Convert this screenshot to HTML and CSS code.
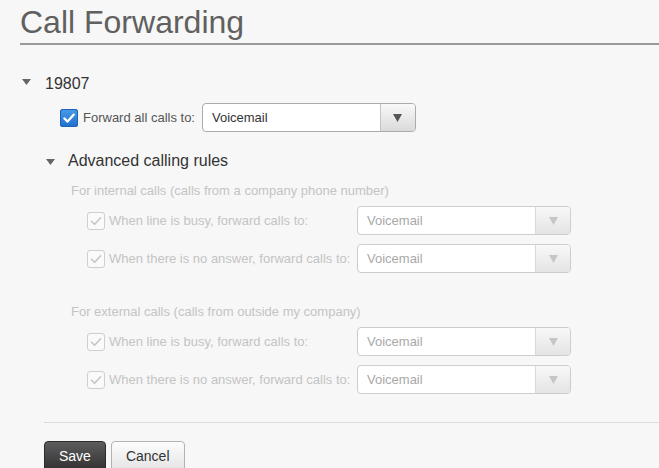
FILE: index.html
```html
<!DOCTYPE html>
<html lang="en">
<head>
<meta charset="utf-8">
<title>Call Forwarding</title>
<link rel="stylesheet" href="styles.css">
</head>
<body>
<div class="page">
  <h1 class="title">Call Forwarding</h1>

  <div class="line-head">
    <svg class="caret" width="9" height="6" viewBox="0 0 9 6"><polygon points="0,0 9,0 4.5,6"/></svg>
    <span class="line-num">19807</span>
  </div>

  <div class="fwd-row">
    <span class="cb cb-on"><svg width="18" height="18" viewBox="0 0 18 18"><path d="M4.3 9.4 L7.6 12.6 L13.8 5.6"/></svg></span>
    <span class="fwd-label">Forward all calls to:</span>
    <div class="select">
      <span class="select-value">Voicemail</span>
      <span class="select-btn"><svg width="9" height="8" viewBox="0 0 9 8"><polygon points="0,0 9,0 4.5,8"/></svg></span>
    </div>
  </div>

  <div class="adv-head">
    <svg class="caret" width="9" height="6" viewBox="0 0 9 6"><polygon points="0,0 9,0 4.5,6"/></svg>
    <span class="adv-title">Advanced calling rules</span>
  </div>

  <div class="group">
    <div class="group-title">For internal calls (calls from a company phone number)</div>
    <div class="rule">
      <span class="cb cb-off"><svg width="18" height="18" viewBox="0 0 18 18"><path d="M4.5 9.2 L7.6 12.3 L13.6 5.8"/></svg></span>
      <span class="rule-label">When line is busy, forward calls to:</span>
      <div class="select select-off">
        <span class="select-value">Voicemail</span>
        <span class="select-btn"><svg width="9" height="8" viewBox="0 0 9 8"><polygon points="0,0 9,0 4.5,8"/></svg></span>
      </div>
    </div>
    <div class="rule">
      <span class="cb cb-off"><svg width="18" height="18" viewBox="0 0 18 18"><path d="M4.5 9.2 L7.6 12.3 L13.6 5.8"/></svg></span>
      <span class="rule-label">When there is no answer, forward calls to:</span>
      <div class="select select-off">
        <span class="select-value">Voicemail</span>
        <span class="select-btn"><svg width="9" height="8" viewBox="0 0 9 8"><polygon points="0,0 9,0 4.5,8"/></svg></span>
      </div>
    </div>
  </div>

  <div class="group group-ext">
    <div class="group-title">For external calls (calls from outside my company)</div>
    <div class="rule">
      <span class="cb cb-off"><svg width="18" height="18" viewBox="0 0 18 18"><path d="M4.5 9.2 L7.6 12.3 L13.6 5.8"/></svg></span>
      <span class="rule-label">When line is busy, forward calls to:</span>
      <div class="select select-off">
        <span class="select-value">Voicemail</span>
        <span class="select-btn"><svg width="9" height="8" viewBox="0 0 9 8"><polygon points="0,0 9,0 4.5,8"/></svg></span>
      </div>
    </div>
    <div class="rule">
      <span class="cb cb-off"><svg width="18" height="18" viewBox="0 0 18 18"><path d="M4.5 9.2 L7.6 12.3 L13.6 5.8"/></svg></span>
      <span class="rule-label">When there is no answer, forward calls to:</span>
      <div class="select select-off">
        <span class="select-value">Voicemail</span>
        <span class="select-btn"><svg width="9" height="8" viewBox="0 0 9 8"><polygon points="0,0 9,0 4.5,8"/></svg></span>
      </div>
    </div>
  </div>

  <div class="separator"></div>

  <div class="actions">
    <button class="btn btn-primary">Save</button>
    <button class="btn btn-secondary">Cancel</button>
  </div>
</div>
</body>
</html>
```

FILE: styles.css
```css
html, body {
  margin: 0;
  padding: 0;
  height: 100%;
  overflow: hidden;
}

body {
  background: #f7f7f7;
  font-family: "Liberation Sans", Arial, sans-serif;
  color: #333;
}

.page {
  padding-left: 20px;
}

.title {
  margin: 0;
  padding: 4px 0 2px 0;
  font-size: 32px;
  line-height: 37px;
  font-weight: normal;
  color: #606060;
  border-bottom: 2px solid #9a9a9a;
}

.caret {
  display: block;
  fill: #666;
  flex: none;
}

.line-head {
  margin-top: 29px;
  height: 20px;
  display: flex;
  align-items: flex-start;
  padding-left: 2px;
}

.line-head .caret {
  margin-top: 5px;
  margin-right: 14px;
}

.line-num {
  font-size: 16px;
  line-height: 20px;
  color: #333;
}

.fwd-row {
  margin-top: 9px;
  padding-left: 40px;
  height: 29px;
  display: flex;
  align-items: center;
}

.cb {
  flex: none;
  width: 18px;
  height: 18px;
  box-sizing: border-box;
  border-radius: 3px;
  display: block;
}

.cb svg {
  display: block;
  fill: none;
  stroke-linecap: round;
  stroke-linejoin: round;
}

.cb-on {
  background: linear-gradient(#4b9be9, #1f6ecb);
  box-shadow: inset 0 0 0 1px #1d63b6;
}

.cb-on svg {
  stroke: #fff;
  stroke-width: 2.2;
}

.cb-off {
  background: #fafafa;
  border: 1px solid #cfcfcf;
}

.cb-off svg {
  margin: -1px;
  stroke: #c6c6c6;
  stroke-width: 1.6;
}

.fwd-label {
  margin-left: 5px;
  margin-right: 7px;
  font-size: 13px;
  line-height: 16px;
  color: #555;
}

.select {
  flex: none;
  width: 214px;
  height: 29px;
  box-sizing: border-box;
  border: 1px solid #ababab;
  border-radius: 4px;
  background: #fff;
  display: flex;
  align-items: stretch;
  overflow: hidden;
}

.select-value {
  flex: 1;
  padding-left: 9px;
  font-size: 13px;
  line-height: 27px;
  color: #333;
}

.select-btn {
  flex: none;
  width: 34px;
  border-left: 1px solid #c4c4c4;
  background: linear-gradient(#f9f9f9, #dadada);
  display: flex;
  align-items: center;
  justify-content: center;
}

.select-btn svg {
  display: block;
  fill: #555;
}

.select-off {
  border-color: #cdcdcd;
}

.select-off .select-value {
  color: #a8a8a8;
}

.select-off .select-btn {
  border-left-color: #dadada;
  background: linear-gradient(#f8f8f8, #e4e4e4);
}

.select-off .select-btn svg {
  fill: #c6c6c6;
}

.adv-head {
  margin-top: 19px;
  padding-left: 26px;
  height: 20px;
  display: flex;
  align-items: flex-start;
}

.adv-head .caret {
  margin-top: 8px;
  margin-right: 13px;
}

.adv-title {
  font-size: 16px;
  line-height: 20px;
  color: #333;
}

.group {
  margin-top: 12px;
  padding-left: 51px;
}

.group-ext {
  margin-top: 31px;
}

.group-title {
  font-size: 13px;
  line-height: 16px;
  color: #c4c4c4;
  margin-bottom: 7px;
}

.rule {
  padding-left: 16px;
  height: 29px;
  display: flex;
  align-items: center;
}

.rule + .rule {
  margin-top: 9px;
}

.rule-label {
  flex: none;
  width: 252px;
  box-sizing: border-box;
  padding-left: 4px;
  font-size: 13px;
  line-height: 16px;
  color: #c4c4c4;
  white-space: nowrap;
}

.separator {
  margin-top: 28px;
  margin-left: 24px;
  height: 1px;
  background: #dcdcdc;
}

.actions {
  margin-top: 18px;
  margin-left: 24px;
  display: flex;
  gap: 5px;
}

.btn {
  height: 31px;
  padding: 0 14px;
  border-radius: 4px;
  font-family: "Liberation Sans", Arial, sans-serif;
  font-size: 14px;
  line-height: 29px;
  cursor: pointer;
}

.btn-primary {
  color: #fff;
  border: 1px solid #2b2b2b;
  background: linear-gradient(#5c5c5c, #303030);
}

.btn-secondary {
  color: #333;
  border: 1px solid #b3b3b3;
  background: linear-gradient(#fdfdfd, #e3e3e3);
}
```
